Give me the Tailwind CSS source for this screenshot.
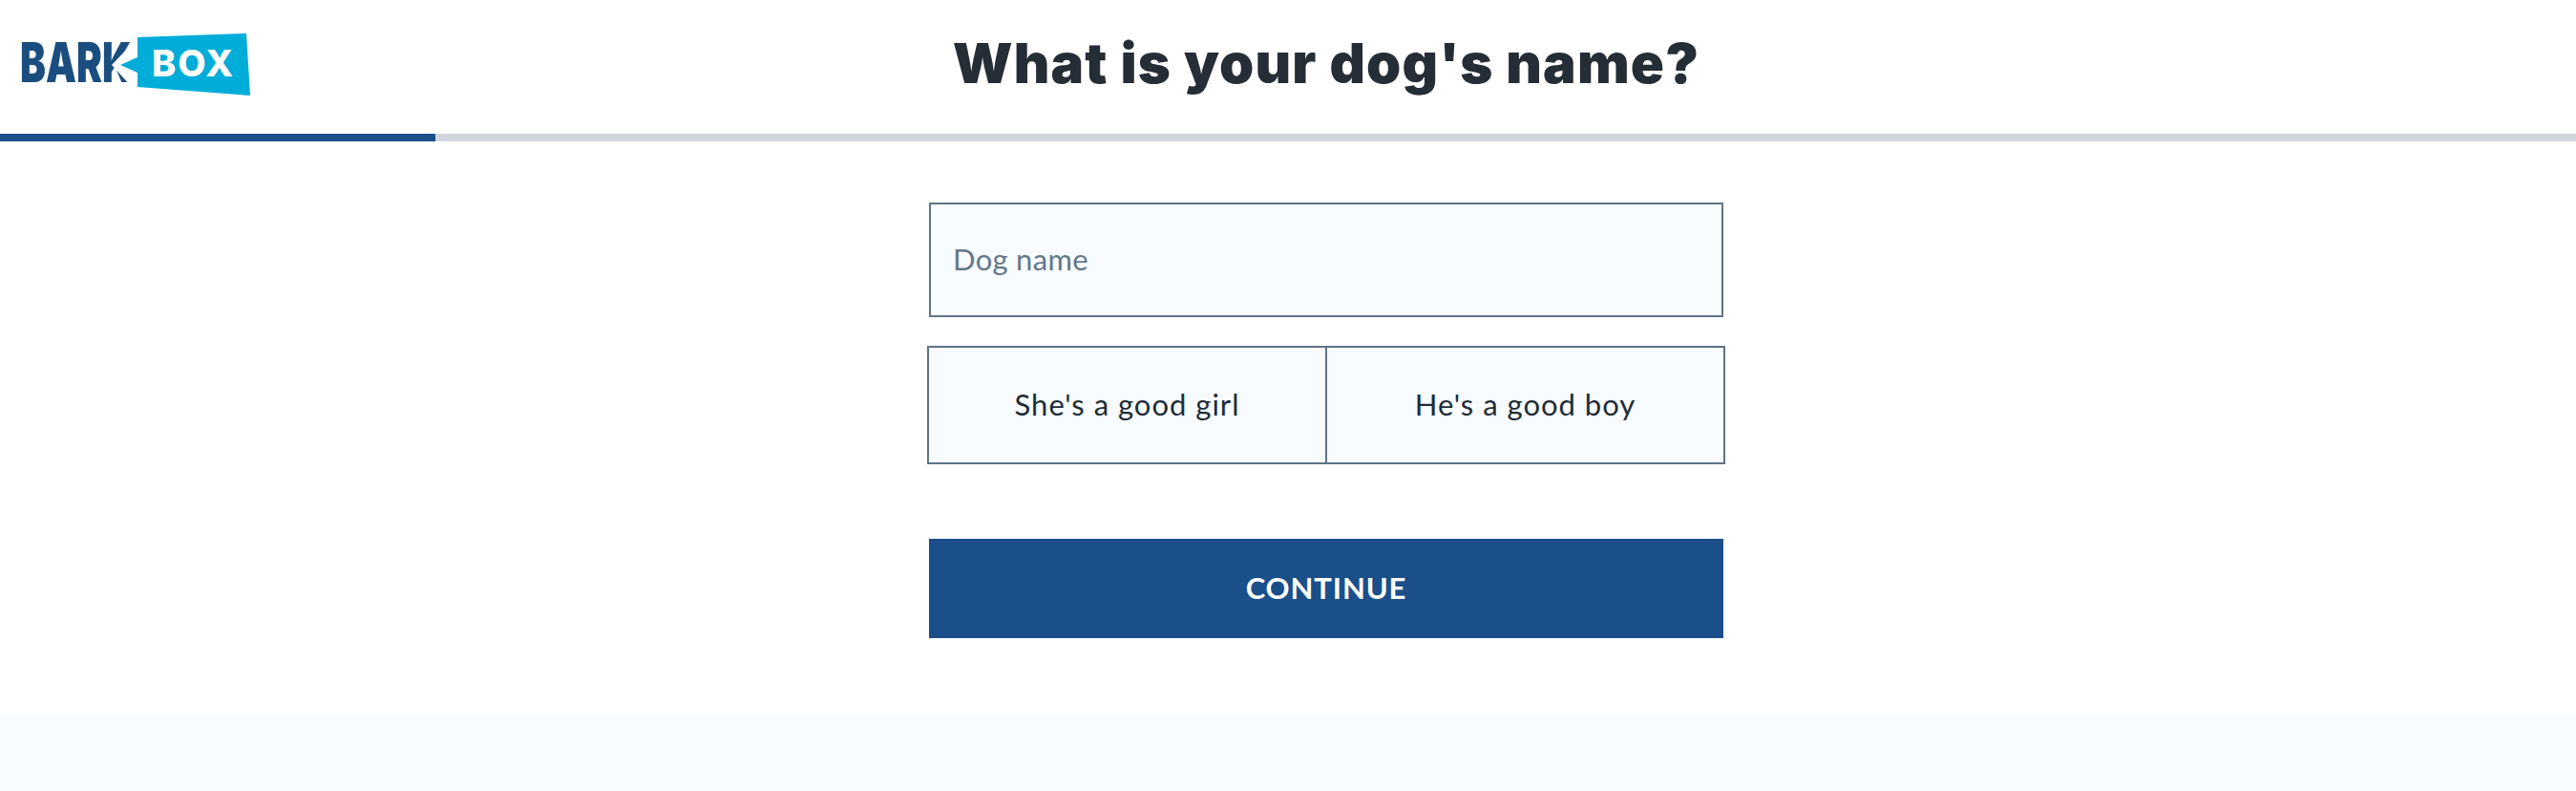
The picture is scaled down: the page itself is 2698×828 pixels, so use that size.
<!DOCTYPE html>
<html lang="en">
<head>
  <meta charset="UTF-8">
  <meta name="viewport" content="width=device-width, initial-scale=1">
  <title>What is your dog's name?</title>
  <script src="https://cdn.jsdelivr.net/npm/@tailwindcss/browser@4"></script>
</head>
<body class="bg-white min-h-screen font-['Lato',sans-serif] text-[#212b36]">
  <header class="flex items-center h-[140px] pl-[22px] pr-[182px]">
    <svg class="w-[240px] h-[140px] shrink-0 overflow-visible" viewBox="22 0 240 140" aria-label="BarkBox logo">
      <text transform="translate(21 86) scale(.695 1)" font-family="Inter" font-weight="900" font-size="58" fill="#1b4e80">BARK</text>
      <polygon points="117,68 137,47 144,47 144,90 137,90" fill="#fff"/>
      <polygon points="144,39 258,35 262,100 144,91 144,76 126,68 144,60" fill="#00acd8"/>
      <text x="159" y="80" font-family="Inter" font-weight="800" font-size="38" letter-spacing="2" fill="#fff">BOX</text>
    </svg>
    <h1 class="flex-1 text-center mb-[9px] font-['Inter',sans-serif] font-black text-[58px] tracking-[1.2px] leading-none text-[#252d36]">What is your dog's name?</h1>
  </header>

  <div class="h-[8px] bg-[#d0d6db]">
    <div class="h-full w-[456px] bg-[#1a4f8a]"></div>
  </div>

  <main class="flex flex-col items-center pl-[80px] pt-[64px] pb-[80px]">
    <input type="text" placeholder="Dog name"
      class="w-[832px] h-[120px] border-2 border-[#5f7387] bg-[#f8fbff] pl-[23px] pr-[24px] pb-[2px] text-[31px] tracking-[0.3px] placeholder:text-[#637889]">

    <div class="flex w-[836px] h-[124px] mt-[30px] border-2 border-[#5f7387] bg-[#f8fbff] text-[31px] tracking-[1px]">
      <button class="flex-1 border-r-2 border-[#5f7387] pb-[2px]">She's a good girl</button>
      <button class="flex-1 pb-[2px]">He's a good boy</button>
    </div>

    <button class="w-[832px] h-[104px] mt-[78px] pb-[2px] bg-[#1a4f8a] text-white text-[31px] font-bold tracking-[0.9px]">CONTINUE</button>
  </main>

  <footer class="h-[80px] bg-[#f8fbff]"></footer>
</body>
</html>
